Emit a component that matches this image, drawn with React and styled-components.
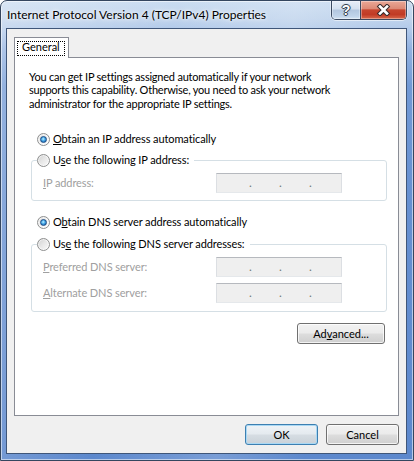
import React from "react";
import styled, { createGlobalStyle, css } from "styled-components";

const FONT = `Lato, "Liberation Sans", Arial, sans-serif`;

const GlobalStyle = createGlobalStyle`
  html, body { margin: 0; padding: 0; background: #ffffff; }
  body { font-family: ${FONT}; font-size: 11px; color: #000; }
  * { box-sizing: border-box; }
`;

const Window = styled.div`
  width: 414px;
  height: 461px;
  display: flex;
  flex-direction: column;
  padding: 0 6px 6px 5px;
  border: 1px solid #34465f;
  border-radius: 7px 7px 0 0;
  background:
    linear-gradient(100deg, rgba(255,255,255,0.28) 0%, rgba(255,255,255,0) 35%, rgba(255,255,255,0.18) 60%, rgba(255,255,255,0) 78%),
    linear-gradient(180deg, #cadcf1 0px, #bfd3ec 18px, #b2caea 28px, #91b1e0 48px, #7199d5 85px, #6690d1 200px, #5c88cd 100%);
  box-shadow: inset 0 0 0 1px rgba(255,255,255,0.55);
`;

const TitleBar = styled.div`
  height: 27px;
  flex: none;
  display: flex;
  align-items: flex-start;
  justify-content: space-between;
`;

const Title = styled.div`
  margin: 6px 0 0 1px;
  font-size: 12px;
  line-height: 15px;
  color: #000;
  white-space: nowrap;
  text-shadow: 0 0 6px rgba(255,255,255,0.95), 0 0 3px rgba(255,255,255,0.9);
`;

const Captions = styled.div`
  display: flex;
  height: 19px;
  border: 1px solid #3b4a61;
  border-top: 0;
  border-radius: 0 0 5px 5px;
  overflow: hidden;
  box-shadow: 0 1px 0 rgba(255,255,255,0.55), 1px 0 0 rgba(255,255,255,0.4), -1px 0 0 rgba(255,255,255,0.4);
`;

const CaptionButton = styled.div`
  display: flex;
  align-items: center;
  justify-content: center;
  height: 100%;
  box-shadow: inset 0 0 0 1px rgba(255,255,255,0.35);
`;

const HelpButton = styled(CaptionButton)`
  width: 28px;
  background: linear-gradient(180deg, #e7eef8 0%, #d4e1f0 45%, #b2c6df 50%, #c1d4ea 85%, #d8e5f4 100%);
`;

const CloseButton = styled(CaptionButton)`
  width: 46px;
  border-left: 1px solid #3b4a61;
  background: linear-gradient(180deg, #e9a897 0%, #dc8a76 42%, #c6452e 50%, #c13b25 75%, #d8694c 100%);
`;

const HelpGlyph = styled.span`
  font-family: "Liberation Sans", Arial, sans-serif;
  font-weight: bold;
  font-size: 14px;
  line-height: 14px;
  color: #fff;
  text-shadow: 1px 0 0 #33404f, -1px 0 0 #33404f, 0 1px 0 #33404f, 0 -1px 0 #33404f, 0 0 2px #33404f;
`;

const Client = styled.div`
  flex: 1;
  display: flex;
  flex-direction: column;
  border: 1px solid #3f5679;
  background: #f0f0f0;
  padding: 8px 7px 8px 7px;
  min-height: 0;
`;

const TabStrip = styled.div`
  display: flex;
  flex: none;
`;

const Tab = styled.div`
  position: relative;
  z-index: 1;
  height: 21px;
  margin-bottom: -1px;
  padding: 3px 3px 0 2px;
  border: 1px solid #898c95;
  border-bottom: 0;
  background: #ffffff;
`;

const FocusLabel = styled.div`
  height: 15px;
  padding: 0 4px;
  border: 1px dotted #000;
  line-height: 9px;
  white-space: nowrap;
`;

const Panel = styled.div`
  flex: 1;
  min-height: 0;
  display: flex;
  flex-direction: column;
  align-items: stretch;
  padding: 12px 0 0 14px;
  border: 1px solid #898c95;
  background: #ffffff;
`;

const Intro = styled.p`
  margin: 0;
  line-height: 13.33px;
  letter-spacing: -0.22px;
  white-space: nowrap;
`;

const OptionRow = styled.div`
  display: flex;
  align-items: flex-start;
  gap: 3px;
  height: 15px;
  margin: ${(p) => p.$mt || 0}px 0 0 8px;
  line-height: 15px;
  letter-spacing: -0.1px;
  white-space: nowrap;
`;

const Radio = styled.span`
  position: relative;
  flex: none;
  width: 13px;
  height: 13px;
  margin-top: 2px;
  border-radius: 50%;
  border: 1px solid #8e8f8f;
  background: linear-gradient(135deg, #cfcfcf 0%, #e6e6e6 45%, #fbfbfb 100%);
  box-shadow: inset 0 0 0 1px rgba(255,255,255,0.6);
  ${(p) =>
    p.$checked &&
    css`
      background: linear-gradient(135deg, #dcdcdc 0%, #f2f2f2 50%, #ffffff 100%);
      &::after {
        content: "";
        position: absolute;
        left: 2px;
        top: 2px;
        width: 7px;
        height: 7px;
        box-sizing: border-box;
        border-radius: 50%;
        border: 1px solid #1c4d86;
        background: radial-gradient(circle at 45% 40%, #c6f2ff 0%, #58b7ef 35%, #2173bd 75%, #1a5596 100%);
      }
    `}
`;

const Group = styled.fieldset`
  margin: ${(p) => p.$mt}px 11px 0 2px;
  padding: 0 10px ${(p) => p.$pb}px 5px;
  border: 1px solid #d5dfe5;
  border-radius: 3px;
  min-width: 0;
`;

const Legend = styled.legend`
  display: flex;
  align-items: flex-start;
  gap: 3px;
  height: 17px;
  padding: 0 5px 2px 0;
  line-height: 15px;
  letter-spacing: -0.1px;
  white-space: nowrap;
`;

const FieldRow = styled.div`
  display: grid;
  grid-template-columns: 173px 126px;
  align-items: center;
  margin: ${(p) => p.$mt}px 0 0 6px;
`;

const FieldLabel = styled.span`
  color: #a0a0a0;
  line-height: 15px;
  letter-spacing: -0.1px;
  white-space: nowrap;
`;

const IpBox = styled.div`
  display: flex;
  align-items: center;
  width: 126px;
  height: 20px;
  padding-left: 32px;
  border: 1px solid;
  border-color: #b6b9be #dcdfe3 #e5e8eb #dcdfe3;
  background: #efefef;
`;

const IpDot = styled.span`
  width: 30px;
  flex: none;
  font-size: 12px;
  line-height: 12px;
  color: #6f7c78;
`;

const PushButton = styled.button`
  width: ${(p) => p.$w}px;
  height: 21px;
  margin: 0;
  padding: 0;
  font-family: ${FONT};
  font-size: 11px;
  color: #000;
  border-radius: 3px;
  border: 1px solid #707070;
  background: linear-gradient(180deg, #f2f2f2 0%, #ebebeb 48%, #dddddd 52%, #cfcfcf 100%);
  box-shadow: inset 0 0 0 1px rgba(255,255,255,0.75);
  ${(p) =>
    p.$default &&
    css`
      border-color: #3c7fb1;
      background: linear-gradient(180deg, #eef3f7 0%, #e4eaef 48%, #d6dde3 52%, #c9d1d8 100%);
      box-shadow: inset 0 0 0 1px #a9d8f4;
    `}
`;

const AdvancedButton = styled(PushButton)`
  align-self: flex-end;
  margin: 11px 13px 0 0;
`;

const ButtonRow = styled.div`
  display: flex;
  justify-content: flex-end;
  gap: 8px;
  margin-top: 8px;
  flex: none;
`;

const CloseIcon = () => (
  <svg width="15" height="12" viewBox="0 0 15 12">
    <path d="M4 2.5 L11 9.5 M11 2.5 L4 9.5" stroke="#3a2b2b" strokeWidth="4.6" strokeLinecap="square" fill="none" />
    <path d="M4 2.5 L11 9.5 M11 2.5 L4 9.5" stroke="#ffffff" strokeWidth="2.6" strokeLinecap="square" fill="none" />
  </svg>
);

const IpField = () => (
  <IpBox>
    <IpDot>.</IpDot>
    <IpDot>.</IpDot>
    <IpDot>.</IpDot>
  </IpBox>
);

export default function App() {
  return (
    <>
      <GlobalStyle />
      <Window>
        <TitleBar>
          <Title>Internet Protocol Version 4 (TCP/IPv4) Properties</Title>
          <Captions>
            <HelpButton>
              <HelpGlyph>?</HelpGlyph>
            </HelpButton>
            <CloseButton>
              <CloseIcon />
            </CloseButton>
          </Captions>
        </TitleBar>
        <Client>
          <TabStrip>
            <Tab>
              <FocusLabel>General</FocusLabel>
            </Tab>
          </TabStrip>
          <Panel>
            <Intro>
              You can get IP settings assigned automatically if your network
              <br />
              supports this capability. Otherwise, you need to ask your network
              <br />
              administrator for the appropriate IP settings.
            </Intro>
            <OptionRow $mt={21}>
              <Radio $checked />
              <span>
                <u>O</u>btain an IP address automatically
              </span>
            </OptionRow>
            <Group $mt={6} $pb={7}>
              <Legend>
                <Radio />
                <span>
                  U<u>s</u>e the following IP address:
                </span>
              </Legend>
              <FieldRow $mt={4}>
                <FieldLabel>
                  <u>I</u>P address:
                </FieldLabel>
                <IpField />
              </FieldRow>
            </Group>
            <OptionRow $mt={13}>
              <Radio $checked />
              <span>
                O<u>b</u>tain DNS server address automatically
              </span>
            </OptionRow>
            <Group $mt={7} $pb={8}>
              <Legend>
                <Radio />
                <span>
                  Us<u>e</u> the following DNS server addresses:
                </span>
              </Legend>
              <FieldRow $mt={4}>
                <FieldLabel>
                  <u>P</u>referred DNS server:
                </FieldLabel>
                <IpField />
              </FieldRow>
              <FieldRow $mt={6}>
                <FieldLabel>
                  <u>A</u>lternate DNS server:
                </FieldLabel>
                <IpField />
              </FieldRow>
            </Group>
            <AdvancedButton $w={88}>
              Ad<u>v</u>anced...
            </AdvancedButton>
          </Panel>
          <ButtonRow>
            <PushButton $w={73} $default>
              OK
            </PushButton>
            <PushButton $w={73}>Cancel</PushButton>
          </ButtonRow>
        </Client>
      </Window>
    </>
  );
}
